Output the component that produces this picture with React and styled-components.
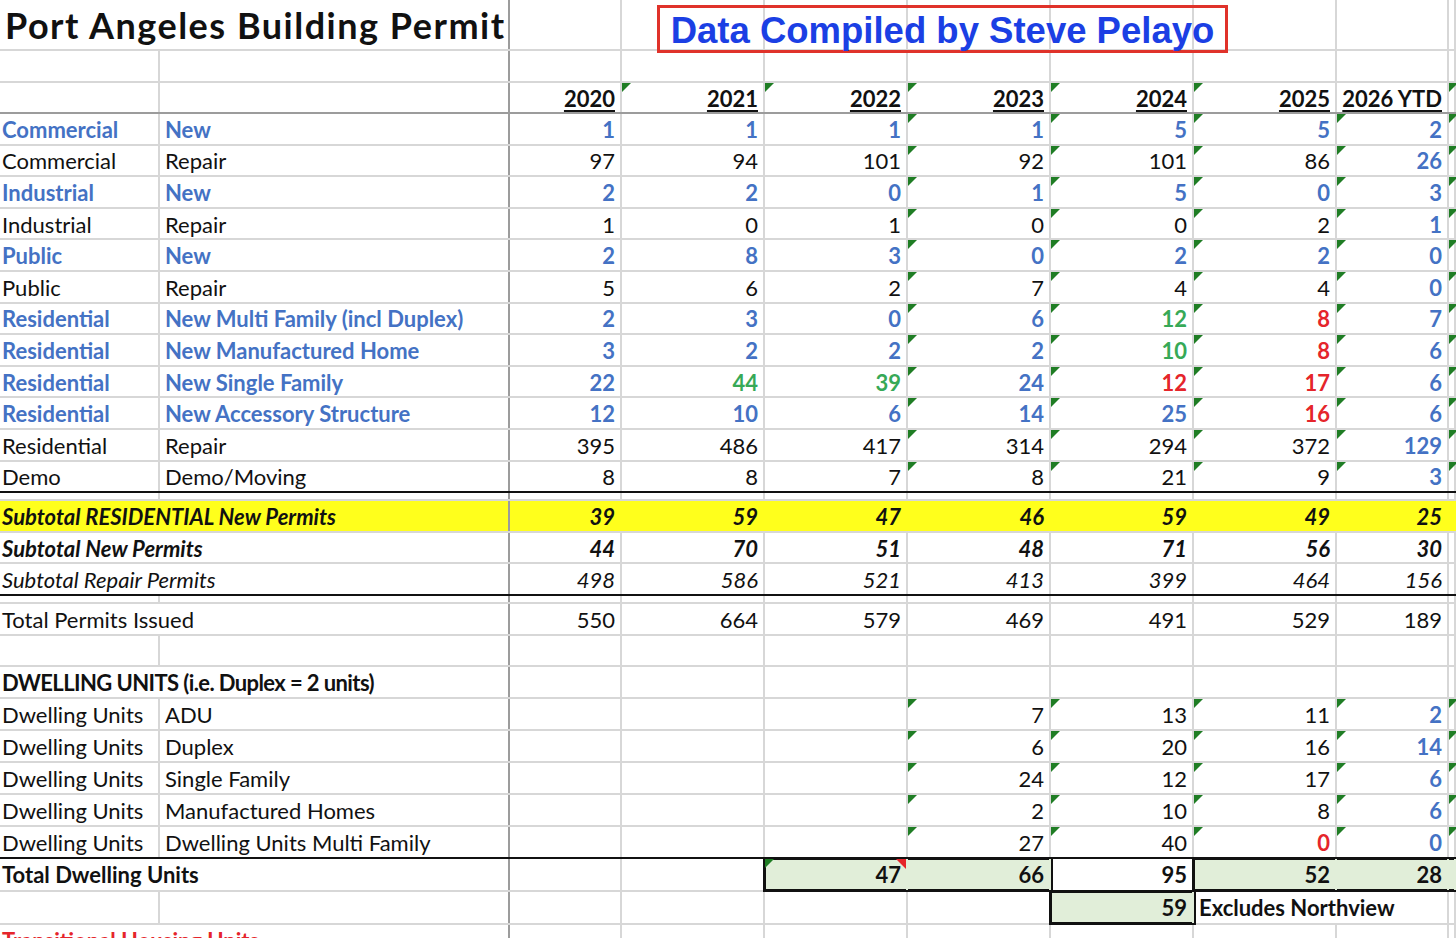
import React from 'react';
import styled, { createGlobalStyle, css } from 'styled-components';

// column widths: A, B, then 2020..2026 YTD, a thin J column and a spill column past the window
const COLS = '160px 350px 112px 143px 143px 143px 143px 143px 112px 7px 100px';
const GRID = '#d7d7d7';
const DIVIDER = '#9c9c9c';
const INK = '#111';
const BLUE = '#4472c4';
const GREEN = '#37a957';
const RED = '#e5252b';
const FLAG = '#1f7d24';
const MINT = '#e1eed9';
const YELLOW = '#ffff1c';

const tones = { k: INK, b: BLUE, g: GREEN, r: RED };

const GlobalStyle = createGlobalStyle`
  html, body {
    margin: 0;
    padding: 0;
    background: #fff;
    overflow: hidden;
  }
  body {
    font-family: Lato, "Liberation Sans", sans-serif;
    color: ${INK};
  }
`;

const Sheet = styled.div`
  position: relative;
  width: 1556px;
`;

const Row = styled.div`
  display: grid;
  grid-template-columns: ${COLS};
  box-sizing: border-box;
  height: ${p => p.$h}px;
  border-bottom: 2px solid ${p => p.$rule || GRID};
`;

const Cell = styled.div`
  position: relative;
  box-sizing: border-box;
  display: flex;
  align-items: center;
  justify-content: ${p => (p.$num ? 'flex-end' : 'flex-start')};
  padding: ${p => (p.$num ? '1px 5px 0 0' : '1px 0 0 5px')};
  grid-column: span ${p => p.$span || 1};
  border-right: 2px solid ${p => p.$edge || GRID};
  background: ${p => p.$fill || 'transparent'};
  color: ${p => tones[p.$tone || 'k']};
  font-size: 22px;
  font-weight: ${p => (p.$bold || (p.$tone && p.$tone !== 'k') ? 700 : 400)};
  font-style: ${p => (p.$italic ? 'italic' : 'normal')};
  white-space: nowrap;

  ${p => p.$flag && css`
    &::before {
      content: '';
      position: absolute;
      left: 0;
      top: 0;
      border-top: 9px solid ${FLAG};
      border-right: 9px solid transparent;
    }
  `}

  ${p => p.$note && css`
    &::after {
      content: '';
      position: absolute;
      right: 0;
      top: 0;
      border-top: 10px solid ${RED};
      border-left: 10px solid transparent;
    }
  `}
`;

// first column sits against the window edge
const Lead = styled(Cell)`
  padding-left: 2px;
`;

const Title = styled(Lead)`
  font-size: 36px;
  font-weight: 700;
  letter-spacing: 1.5px;
  padding-left: 5px;
`;

const Heading = styled(Lead)`
  font-weight: 700;
  letter-spacing: -0.6px;
`;

const Year = styled(Cell)`
  font-weight: 700;
  text-decoration: underline;
  text-decoration-thickness: 2px;
  text-underline-offset: 3px;
`;

const Boxed = styled.div`
  position: relative;
  z-index: 1;
  display: grid;
  grid-template-columns: ${p => p.$cols};
  grid-column: span ${p => p.$span};
  background: ${p => p.$fill || 'transparent'};
  outline: 3px solid ${INK};
  outline-offset: -1px;
`;

const Callout = styled.div`
  position: absolute;
  left: 657px;
  top: 5px;
  width: 571px;
  height: 48px;
  box-sizing: border-box;
  padding-top: 3px;
  border: 3px solid #e0322a;
  display: flex;
  align-items: center;
  justify-content: center;
  font-family: "Liberation Sans", Arial, sans-serif;
  font-weight: 700;
  font-size: 36.5px;
  color: #1b3fe4;
  white-space: nowrap;
`;

const DATA_FLAGS = [5, 6, 7, 8, 9];
const HEAD_FLAGS = [3, 4, 5, 6, 7];
const YEARS = ['2020', '2021', '2022', '2023', '2024', '2025', '2026 YTD'];

const permits = [
  ['Commercial', 'New', 'b', '1 1 1 1 5 5 2'],
  ['Commercial', 'Repair', 'k', '97 94 101 92 101 86 b26'],
  ['Industrial', 'New', 'b', '2 2 0 1 5 0 3'],
  ['Industrial', 'Repair', 'k', '1 0 1 0 0 2 b1'],
  ['Public', 'New', 'b', '2 8 3 0 2 2 0'],
  ['Public', 'Repair', 'k', '5 6 2 7 4 4 b0'],
  ['Residential', 'New Multi Family (incl Duplex)', 'b', '2 3 0 6 g12 r8 7'],
  ['Residential', 'New Manufactured Home', 'b', '3 2 2 2 g10 r8 6'],
  ['Residential', 'New Single Family', 'b', '22 g44 g39 24 r12 r17 6'],
  ['Residential', 'New Accessory Structure', 'b', '12 10 6 14 25 r16 6'],
  ['Residential', 'Repair', 'k', '395 486 417 314 294 372 b129'],
  ['Demo', 'Demo/Moving', 'k', '8 8 7 8 21 9 b3'],
];

const dwellings = [
  ['ADU', '- - - 7 13 11 b2'],
  ['Duplex', '- - - 6 20 16 b14'],
  ['Single Family', '- - - 24 12 17 b6'],
  ['Manufactured Homes', '- - - 2 10 8 b6'],
  ['Dwelling Units Multi Family', '- - - 27 40 r0 b0'],
];

// cells for columns C..K (index 2..10); spec is space separated, a leading k/b/g/r sets the colour
const Values = ({ spec = '', tone = 'k', flags = [], fill, bold, italic }) => {
  const tokens = spec ? spec.split(' ') : [];
  return Array.from({ length: 9 }, (_, i) => {
    const col = i + 2;
    const raw = tokens[i] && tokens[i] !== '-' ? tokens[i] : '';
    const coded = /^[kbgr]/.test(raw);
    const filled = fill && col <= 9 ? fill : undefined;
    return (
      <Cell
        key={col}
        $num
        $tone={coded ? raw[0] : tone}
        $bold={bold}
        $italic={italic}
        $fill={filled}
        $edge={filled}
        $flag={flags.includes(col)}
      >
        {coded ? raw.slice(1) : raw}
      </Cell>
    );
  });
};

const Labels = ({ a = '', b = '', tone }) => (
  <>
    <Lead $tone={tone}>{a}</Lead>
    <Cell $tone={tone} $edge={DIVIDER}>{b}</Cell>
  </>
);

export default function App() {
  return (
    <>
      <GlobalStyle />
      <Sheet>
        <Row $h={51}>
          <Title $span={2} $edge={DIVIDER}>Port Angeles Building Permit</Title>
          <Values />
        </Row>
        <Row $h={32}>
          <Labels />
          <Values />
        </Row>
        <Row $h={31} $rule={DIVIDER}>
          <Labels />
          {YEARS.map((y, i) => (
            <Year key={y} $num $flag={HEAD_FLAGS.includes(i + 2)}>{y}</Year>
          ))}
          <Cell $flag />
          <Cell />
        </Row>

        {permits.map(([a, b, tone, spec], i) => (
          <Row key={a + b} $h={31.6} $rule={i === permits.length - 1 ? INK : undefined}>
            <Labels a={a} b={b} tone={tone} />
            <Values spec={spec} tone={tone} flags={DATA_FLAGS} />
          </Row>
        ))}

        <Row $h={8}>
          <Labels />
          <Values />
        </Row>
        <Row $h={31.6}>
          <Lead $span={2} $bold $italic $fill={YELLOW} $edge={DIVIDER}>Subtotal RESIDENTIAL New Permits</Lead>
          <Values spec="39 59 47 46 59 49 25" bold italic fill={YELLOW} />
        </Row>
        <Row $h={31.6}>
          <Lead $span={2} $bold $italic $edge={DIVIDER}>Subtotal New Permits</Lead>
          <Values spec="44 70 51 48 71 56 30" bold italic />
        </Row>
        <Row $h={31.6} $rule={INK}>
          <Lead $span={2} $italic $edge={DIVIDER}>Subtotal Repair Permits</Lead>
          <Values spec="498 586 521 413 399 464 156" italic />
        </Row>
        <Row $h={8}>
          <Labels />
          <Values />
        </Row>
        <Row $h={31.6}>
          <Lead $span={2} $edge={DIVIDER}>Total Permits Issued</Lead>
          <Values spec="550 664 579 469 491 529 189" />
        </Row>
        <Row $h={31.6}>
          <Labels />
          <Values />
        </Row>
        <Row $h={31.8}>
          <Heading $span={2} $edge={DIVIDER}>DWELLING UNITS (i.e. Duplex = 2 units)</Heading>
          <Values />
        </Row>

        {dwellings.map(([b, spec], i) => (
          <Row key={b} $h={32} $rule={i === dwellings.length - 1 ? INK : undefined}>
            <Labels a="Dwelling Units" b={b} />
            <Values spec={spec} flags={DATA_FLAGS} />
          </Row>
        ))}

        <Row $h={33}>
          <Lead $span={2} $bold $edge={DIVIDER}>Total Dwelling Units</Lead>
          <Cell />
          <Cell />
          <Boxed $span={2} $cols="143px 143px" $fill={MINT}>
            <Cell $num $bold $edge={MINT} $flag $note>47</Cell>
            <Cell $num $bold $edge={MINT}>66</Cell>
          </Boxed>
          <Cell $num $bold>95</Cell>
          <Boxed $span={4} $cols="143px 112px 7px 100px" $fill={MINT}>
            <Cell $num $bold $edge={MINT}>52</Cell>
            <Cell $num $bold $edge={MINT}>28</Cell>
            <Cell $edge={MINT} />
            <Cell $edge={MINT} />
          </Boxed>
        </Row>
        <Row $h={33}>
          <Labels />
          <Cell />
          <Cell />
          <Cell />
          <Cell />
          <Boxed $span={1} $cols="143px" $fill={MINT}>
            <Cell $num $bold $edge={MINT}>59</Cell>
          </Boxed>
          <Cell $span={2} $bold>Excludes Northview</Cell>
          <Cell />
          <Cell />
        </Row>
        <Row $h={32}>
          <Lead $span={2} $tone="r" $edge={DIVIDER}>Transitional Housing Units</Lead>
          <Values />
        </Row>

        <Callout>Data Compiled by Steve Pelayo</Callout>
      </Sheet>
    </>
  );
}
